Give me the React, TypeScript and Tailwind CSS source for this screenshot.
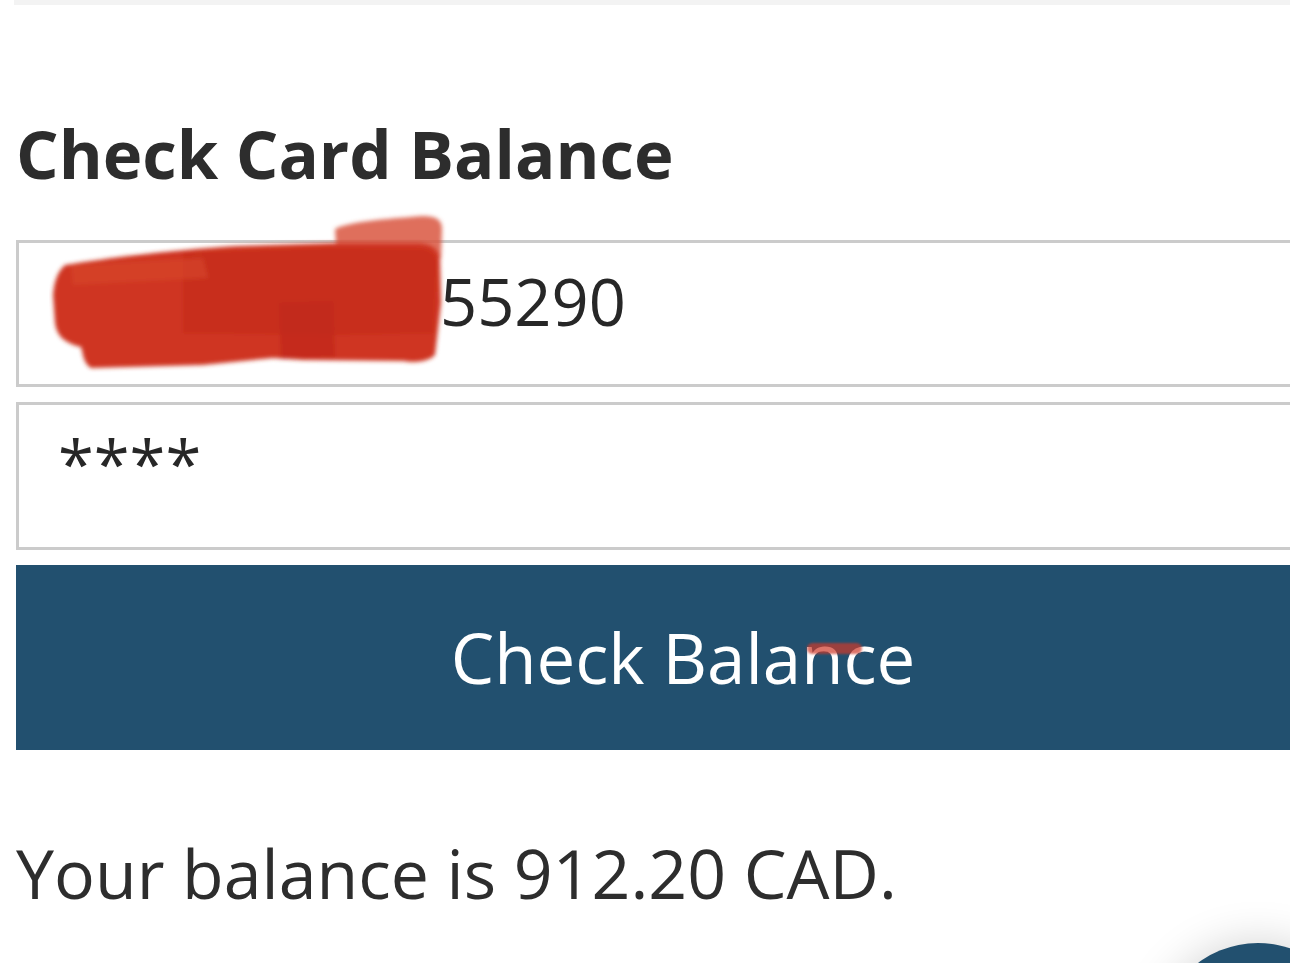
import React from 'react';

const FONT = { fontFamily: '"Open Sans", "Liberation Sans", sans-serif' };

// Red marker scribble that hides the card number
function Scribble() {
  return (
    <svg
      className="absolute left-[30px] top-[-32px] pointer-events-none"
      width="420"
      height="165"
      viewBox="0 0 420 165"
    >
      <defs>
        <filter id="soft" x="-10%" y="-10%" width="120%" height="120%">
          <feGaussianBlur stdDeviation="2.2" />
        </filter>
      </defs>
      <g transform="translate(-46,-208)" filter="url(#soft)">
        <path
          d="M332 226 C345 219 380 216 420 213 C432 213 439 216 439 226 L438 256 L334 258 Z"
          fill="#d9553f"
          opacity="0.85"
        />
        <path
          d="M62 262 C110 254 180 246 235 243 L330 240 L415 240 C430 241 436 246 437 258 L438 300 L432 352 C425 359 412 360 400 358 L300 357 L270 355 L200 362 L88 365 C80 360 80 350 78 344 C62 340 54 334 52 320 L50 292 C51 278 55 268 62 262 Z"
          fill="#cf3520"
        />
        <path
          d="M180 250 L330 245 L420 246 C432 248 434 256 433 268 L430 330 L330 332 L180 330 Z"
          fill="#c2281a"
          opacity="0.55"
        />
        <path d="M276 300 L330 298 L332 354 L278 356 Z" fill="#bb2418" opacity="0.5" />
        <path d="M68 262 L200 255 L205 275 L70 282 Z" fill="#d7472f" opacity="0.6" />
      </g>
    </svg>
  );
}

export default function App() {
  return (
    <div className="relative w-full h-[963px] overflow-hidden bg-white" style={FONT}>
      {/* header edge */}
      <div className="h-[5px] ml-[14px] bg-[#f3f3f3]" />

      <div className="w-[1334px] ml-[16px]">
        <h1 className="mt-[115px] text-[67px] leading-none font-bold text-[#2d2d2d]">
          Check Card Balance
        </h1>

        <div className="mt-[53px] flex flex-col gap-[15px]">
          <div className="relative h-[147px] border-[3px] border-[#cbcbcb] pl-[39px] pt-[26px] text-[65px] leading-none text-[#272727] whitespace-nowrap">
            <span className="inline-block w-[382px]" />
            <span>55290</span>
            <Scribble />
          </div>

          <div className="h-[148px] border-[3px] border-[#cbcbcb] pl-[39px] pt-[26px] text-[65px] leading-none text-[#272727]">
            ****
          </div>

          <button className="relative h-[185px] w-full flex items-center justify-center bg-[#22506f] text-white text-[69px] leading-none">
            Check Balance
            <span className="absolute left-[791px] top-[78px] w-[55px] h-[11px] rounded-full bg-[#cf3a2a] opacity-70 blur-[1px]" />
          </button>
        </div>

        <p className="mt-[89px] text-[68px] leading-none text-[#2d2d2d]">
          Your balance is 912.20 CAD.
        </p>
      </div>

      {/* chat launcher */}
      <div className="absolute left-[1158px] top-[943px] w-[200px] h-[200px] rounded-full bg-[#22506f] shadow-[0_0_45px_rgba(0,0,0,0.18)]" />
    </div>
  );
}
